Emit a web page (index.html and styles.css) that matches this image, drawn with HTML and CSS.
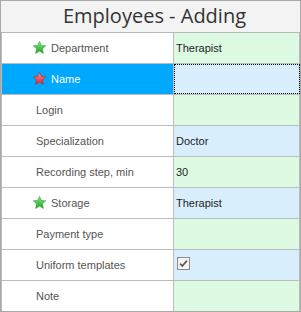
FILE: index.html
```html
<!DOCTYPE html>
<html lang="en">
<head>
<meta charset="UTF-8" />
<title>Employees - Adding</title>
<link rel="stylesheet" href="styles.css">
</head>
<body>

<svg class="defs" width="0" height="0">
  <defs>
    <linearGradient id="starGreen" x1="0" y1="0" x2="0" y2="1">
      <stop offset="0" stop-color="#86e886" />
      <stop offset="1" stop-color="#1aa51f" />
    </linearGradient>
    <linearGradient id="starRed" x1="0" y1="0" x2="0" y2="1">
      <stop offset="0" stop-color="#ff9090" />
      <stop offset="1" stop-color="#de2626" />
    </linearGradient>
    <path id="star" d="M6.5 .4 L8.35 4.4 12.7 4.85 9.45 7.8 10.35 12.4 6.5 10.1 2.65 12.4 3.55 7.8 .3 4.85 4.65 4.4Z" />
  </defs>
</svg>

<div class="window">
  <div class="title">Employees - Adding</div>

  <div class="form">
    <div class="row">
      <div class="label with-icon">
        <svg class="star green" viewBox="0 0 13 13"><use href="#star" /></svg>
        Department
      </div>
      <div class="value green">Therapist</div>
    </div>

    <div class="row selected">
      <div class="label with-icon">
        <svg class="star red" viewBox="0 0 13 13"><use href="#star" /></svg>
        Name
      </div>
      <div class="value blue focused"></div>
    </div>

    <div class="row">
      <div class="label">Login</div>
      <div class="value green"></div>
    </div>

    <div class="row">
      <div class="label">Specialization</div>
      <div class="value blue">Doctor</div>
    </div>

    <div class="row">
      <div class="label">Recording step, min</div>
      <div class="value green">30</div>
    </div>

    <div class="row">
      <div class="label with-icon">
        <svg class="star green" viewBox="0 0 13 13"><use href="#star" /></svg>
        Storage
      </div>
      <div class="value blue">Therapist</div>
    </div>

    <div class="row">
      <div class="label">Payment type</div>
      <div class="value green"></div>
    </div>

    <div class="row">
      <div class="label">Uniform templates</div>
      <div class="value blue">
        <span class="checkbox">
          <svg viewBox="0 0 11 11"><path d="M2 5.6 L4.3 8 L9 2.6" /></svg>
        </span>
      </div>
    </div>

    <div class="row">
      <div class="label">Note</div>
      <div class="value green"></div>
    </div>
  </div>
</div>

</body>
</html>
```

FILE: styles.css
```css
* {
  box-sizing: border-box;
}
body {
  margin: 0;
  font-family: "Liberation Sans", Arial, sans-serif;
  font-size: 11px;
  background: #ffffff;
}
.defs {
  position: absolute;
}

/* Pencere */
.window {
  width: 301px;
  height: 312px;
  border: 1px solid #a8a8a8;
  background: #ffffff;
  display: flex;
  flex-direction: column;
}
.title {
  height: 32px;
  border-bottom: 1px solid #b8b8b8;
  background: #f3f3f3;
  color: #333333;
  font-family: "Open Sans", "Noto Sans", sans-serif;
  font-size: 20px;
  line-height: 30px;
  text-align: center;
  padding-left: 8px;
}

/* Form satırları */
.form {
  display: flex;
  flex-direction: column;
}
.row {
  display: flex;
  height: 31px;
  border-bottom: 1px solid #bcbcbc;
}
.row:last-child {
  height: 30px;
  border-bottom: none;
}
.label {
  width: 173px;
  border-left: 1px solid #bcbcbc;
  border-right: 1px solid #bcbcbc;
  padding-left: 34px;
  display: flex;
  align-items: center;
  color: #555555;
  background: #ffffff;
}
.label.with-icon {
  padding-left: 31px;
  gap: 5px;
}
.row.selected .label {
  background: #00a8ff;
  color: #ffffff;
}
.value {
  width: 126px;
  border-right: 1px solid #bcbcbc;
  padding-left: 2px;
  display: flex;
  align-items: center;
  color: #1e1e1e;
}
.value.green {
  background: #dcf9e1;
}
.value.blue {
  background: #d9eefd;
}
.value.focused {
  outline: 1px dotted #000000;
  outline-offset: -1px;
}

/* Yıldız ikonları */
.star {
  width: 13px;
  height: 13px;
  flex-shrink: 0;
  margin-top: -1px;
}
.star.green {
  fill: url(#starGreen);
  stroke: #3a9a3c;
  stroke-width: 0.6;
}
.star.red {
  fill: url(#starRed);
  stroke: #c02424;
  stroke-width: 0.6;
}

/* Onay kutusu */
.checkbox {
  width: 13px;
  height: 13px;
  margin-left: 1px;
  margin-top: -3px;
  border: 1px solid #8a8a8a;
  background: #f4f4f4;
  display: flex;
}
.checkbox svg {
  width: 11px;
  height: 11px;
  fill: none;
  stroke: #555555;
  stroke-width: 1.6;
}
```
